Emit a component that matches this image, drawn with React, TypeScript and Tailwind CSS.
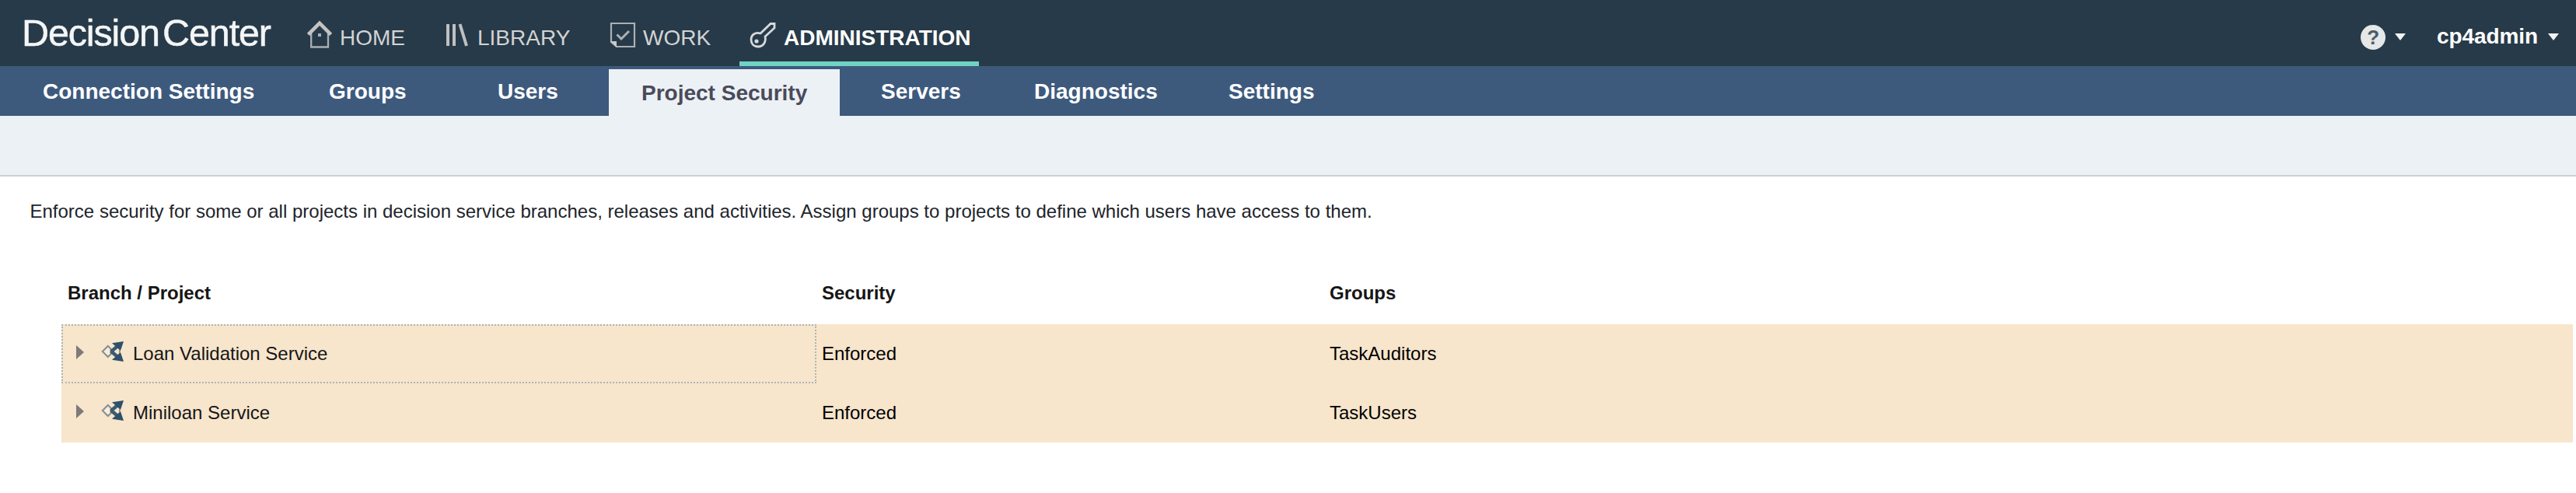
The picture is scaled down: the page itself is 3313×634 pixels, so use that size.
import React from "react";

function HomeIcon() {
  return (
    <svg width="36" height="40" viewBox="0 0 36 40" fill="none">
      <path d="M7.200 18 V36.500 H29 V18" stroke="#a9b0b5" strokeWidth="2.300" />
      <path d="M18 2.500 L34.200 18.800 L31 22 L18 9 L5 22 L1.800 18.800 Z" fill="#c2c3c4" />
      <rect x="16" y="19" width="4" height="4" fill="#a9b0b5" />
    </svg>
  );
}

function LibraryIcon() {
  return (
    <svg width="30" height="30" viewBox="0 0 30 30" fill="none" stroke="#bfc0c1" strokeWidth="4">
      <path d="M3 1 V29 M11 1 V29 M18.500 1 L27 29" />
    </svg>
  );
}

function WorkIcon() {
  return (
    <svg width="34" height="34" viewBox="0 0 34 34" fill="none">
      <path d="M2 26 V2 H32 V32 H9 Z" stroke="#aab0b5" strokeWidth="2.200" />
      <path d="M1 25 H9 V33 Z" fill="#c9cacb" />
      <path d="M9.500 16.500 L15 22 L25 12" stroke="#aab0b5" strokeWidth="3" />
    </svg>
  );
}

function KeyIcon() {
  return (
    <svg width="34" height="34" viewBox="0 0 34 34" fill="none" stroke="#d5d8da" strokeWidth="2.800">
      <path d="M14 15 L27 2.500 H32 V8 L20 19 C21.500 26 17.500 32 11 32 C5 32 2 28 2 23 C2 17 7 13 14 15 Z" />
      <circle cx="9" cy="25" r="2.600" fill="#d5d8da" stroke="none" />
    </svg>
  );
}

function Caret() {
  return (
    <svg width="14" height="9" viewBox="0 0 14 9">
      <path d="M0 0 H14 L7 9 Z" fill="#f3f3f3" />
    </svg>
  );
}

function ProjectIcon() {
  return (
    <svg width="30" height="28" viewBox="0 0 30 28" fill="none">
      <path d="M1.800 14 L8.800 7 L15.800 14 L8.800 21 Z" fill="#f8ecdb" stroke="#85908f" strokeWidth="2" />
      <path d="M12.500 14.500 L22 6.500 M12.500 13.500 L22 21.500" stroke="#3c5a71" strokeWidth="4.500" />
      <path d="M14 3.300 L29 1 L25 13 Z M14 24.700 L29 27 L25 15 Z" fill="#2f506a" />
      <path d="M24 12 V16" stroke="#8b979b" strokeWidth="2" />
    </svg>
  );
}

const tabs = [
  { label: "Connection Settings", box: "w-[368px] pl-[55px]" },
  { label: "Groups", box: "w-[216px] pl-[55px]" },
  { label: "Users", box: "w-[199px] pl-[56px]" },
  { label: "Project Security", box: "w-[297px] pl-[42px]", active: true },
  { label: "Servers", box: "w-[196px] pl-[53px]" },
  { label: "Diagnostics", box: "w-[250px] pl-[54px]" },
  { label: "Settings", box: "w-[200px] pl-[54px]" },
];

const rows = [
  { name: "Loan Validation Service", groups: "TaskAuditors", focused: true },
  { name: "Miniloan Service", groups: "TaskUsers", focused: false },
];

export default function App() {
  return (
    <div className="h-[634px] w-[3313px] overflow-hidden bg-white font-['Liberation_Sans',Arial,sans-serif] text-[24px] leading-[28px] whitespace-nowrap text-[#161616]">
      <header className="flex h-[85px] items-start bg-[#273a49] text-[28px] leading-[32px] text-[#d3d3d3]">
        <div className="w-[393px] pt-[15px] pl-[28px] text-[48.500px] leading-[54px] tracking-[-1.150px] text-[#f4f5f6] [-webkit-text-stroke:0.500px_#f4f5f6] [word-spacing:-8px]">
          Decision Center
        </div>
        <div className="flex w-[180px] pt-[24px]">
          <HomeIcon />
          <span className="pt-[9px] pl-[8px]">HOME</span>
        </div>
        <div className="flex w-[211px] pt-[30px]">
          <LibraryIcon />
          <span className="pt-[3px] pl-[11px]">LIBRARY</span>
        </div>
        <div className="flex w-[167px] pt-[28px]">
          <WorkIcon />
          <span className="pt-[5px] pl-[9px]">WORK</span>
        </div>
        <div className="flex h-[85px] w-[308px] border-b-[6px] border-[#70d3c4] pt-[28px] pl-[13px] font-bold text-white">
          <KeyIcon />
          <span className="pt-[5px] pl-[10px]">ADMINISTRATION</span>
        </div>
        <div className="ml-auto flex pr-[22px]">
          <div className="mt-[32px] flex h-[32px] w-[32px] items-center justify-center rounded-full bg-[#e6e7e7] text-[26px] font-bold text-[#4a5d6c]">
            ?
          </div>
          <div className="pt-[43px] pl-[12px]">
            <Caret />
          </div>
          <div className="pt-[31px] pl-[40px] font-bold tracking-[-0.100px] text-white">cp4admin</div>
          <div className="pt-[43px] pl-[13px]">
            <Caret />
          </div>
        </div>
      </header>

      <nav className="flex h-[64px] items-end bg-[#3d5a7d] text-[28px] leading-[32px] font-bold text-white">
        {tabs.map((t) => (
          <div
            key={t.label}
            className={`${t.box} ${t.active ? "h-[60px] bg-[#ecf1f6] pt-[15px] text-[#4a4b59]" : "h-[64px] pt-[17px]"}`}
          >
            {t.label}
          </div>
        ))}
      </nav>
      <div className="h-[78px] border-b-2 border-[#c8d2d2] bg-[#ecf1f6]" />

      <main>
        <p className="pt-[31px] pl-[38.500px] text-[#20242a]">
          Enforce security for some or all projects in decision service branches, releases and activities. Assign groups to projects to define which users have access to them.
        </p>
        <div className="mt-[77px] ml-[79px] w-[3230px]">
          <div className="flex h-[54px] font-bold">
            <div className="w-[971px] pl-[8px]">Branch / Project</div>
            <div className="w-[652px] pl-[7px]">Security</div>
            <div className="pl-[8px]">Groups</div>
          </div>
          {rows.map((r) => (
            <div key={r.name} className="flex h-[76px] bg-[#f7e5cc]">
              <div
                className={`flex w-[971px] items-start border-2 pl-[17px] ${r.focused ? "border-dotted border-[#adb5b6]" : "border-transparent"}`}
              >
                <svg className="mt-[25px]" width="10" height="18" viewBox="0 0 10 18">
                  <path d="M0 0 L10 9 L0 18 Z" fill="#7d7b79" />
                </svg>
                <div className="mt-[19px] ml-[22px]">
                  <ProjectIcon />
                </div>
                <span className="pt-[22px] pl-[11px]">{r.name}</span>
              </div>
              <div className="w-[652px] pt-[24px] pl-[7px] text-black">Enforced</div>
              <div className="pt-[24px] pl-[8px] text-black">{r.groups}</div>
            </div>
          ))}
        </div>
      </main>
    </div>
  );
}
